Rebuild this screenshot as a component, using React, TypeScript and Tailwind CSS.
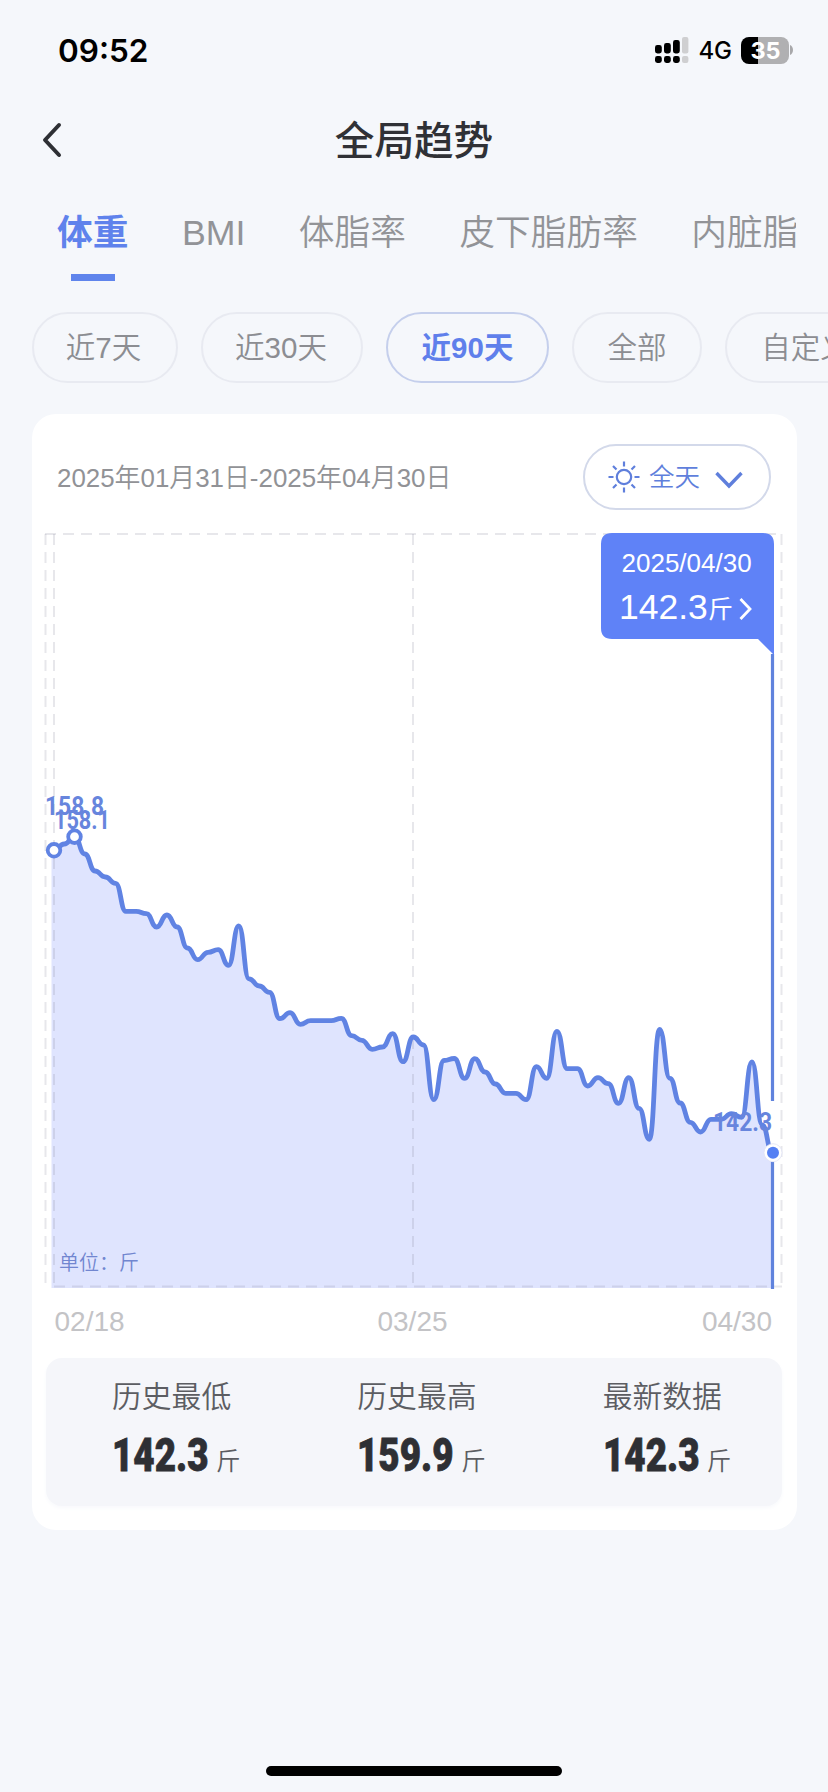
import React from "react";

const WEIGHTS_Y = [
  850.3, 844, 836.7, 854, 871, 877, 883.3, 911.3, 911.3, 913.7, 927, 915, 927, 948, 959.7, 952.3, 949.7, 965.3, 926,
  978.8, 986, 992.3, 1018.7, 1012.7, 1024.3, 1020.7, 1020.7, 1020.7, 1018.3, 1035.7, 1040.3, 1049.3, 1047, 1033.7,
  1061.7, 1037, 1045, 1099.7, 1060.5, 1058.5, 1078.3, 1058.7, 1072, 1084, 1093.3, 1093.3, 1099.7, 1066.7, 1078.3,
  1031.3, 1068.7, 1068.7, 1086, 1077.7, 1083.7, 1103.3, 1077.7, 1108.3, 1139.3, 1029.3, 1078.3, 1103, 1122.3, 1132,
  1119.3, 1119.3, 1113.7, 1117.3, 1062, 1125, 1152.7,
];
const STEP = 10.264;
const points = WEIGHTS_Y.map((y, i) => ({ x: 22 + i * STEP, y: y - 524 }));

// Smooth curve whose tangent is horizontal at every sample.
const line = points
  .map((p, i) => {
    if (i === 0) return `M${p.x} ${p.y}`;
    const q = points[i - 1];
    const m = (p.x + q.x) / 2;
    return `C${m} ${q.y} ${m} ${p.y} ${p.x} ${p.y}`;
  })
  .join("");
const area = `M19.5 764V${points[0].y}H22${line.replace(/^M/, "L")}V764Z`;

const TABS = ["BMI", "体脂率", "皮下脂肪率", "内脏脂肪"];
const STATS = [
  { label: "历史最低", value: "142.3" },
  { label: "历史最高", value: "159.9" },
  { label: "最新数据", value: "142.3" },
];

function StatusBar() {
  return (
    <div className="flex h-[100px] items-center justify-between pr-[34px] pl-[58px]">
      <span className="pt-[1px] font-['Inter'] text-[31.5px] leading-none font-semibold text-black">09:52</span>
      <div className="flex items-center">
        <svg width="34" height="28" viewBox="0 0 34 28" className="mr-[10px]">
          <g fill="#000">
            <rect x="0" y="9" width="6.8" height="8.4" rx="2.4" />
            <rect x="9" y="7" width="6.8" height="10.4" rx="2.4" />
            <rect x="18" y="4" width="6.8" height="13.4" rx="2.4" />
            <rect x="0" y="20" width="6.8" height="7" rx="2.4" />
            <rect x="9" y="20" width="6.8" height="7" rx="2.4" />
            <rect x="18" y="20" width="6.8" height="7" rx="2.4" />
          </g>
          <g fill="#cfcfd1">
            <rect x="27" y="1" width="6.4" height="16.4" rx="2" />
            <rect x="27" y="20" width="6.4" height="7" rx="2" />
          </g>
        </svg>
        <span className="mr-[10px] w-[32px] pt-[1px] font-['Inter'] text-[24px] leading-none font-medium tracking-[-0.3px] text-black">4G</span>
        <div className="flex h-[27px] w-[48px] items-center justify-center rounded-[8px] bg-linear-to-r from-black from-35% to-[#b0b0b2] to-35% pt-[1px] pl-[2px] font-['Inter'] text-[23.5px] leading-none font-bold text-white">
          35
        </div>
        <svg width="4" height="10" viewBox="0 0 4 10" className="ml-[1.5px]">
          <path d="M0 0C4 1.5 4 8.5 0 10Z" fill="#a8a8aa" />
        </svg>
      </div>
    </div>
  );
}

function Chart() {
  return (
    <svg width="765" height="830" viewBox="0 0 765 830" className="block">
      <path d={area} fill="#dfe4fe" />
      <g stroke="#85859c" strokeOpacity="0.2" strokeWidth="2" strokeDasharray="11 7" fill="none">
        <path d="M13.5 10V763" />
        <path d="M22 10V763" />
        <path d="M381 10V763" />
        <path d="M749.5 10V763" />
        <path d="M13 10H750" />
        <path d="M22 762.5H750" />
      </g>
      <path d={line} fill="none" stroke="#6083e3" strokeWidth="4.8" strokeLinejoin="round" />
      <path d="M740.5 130V577M740.5 638V765" stroke="#6083dd" strokeWidth="3.2" />
      <circle cx="22" cy="326.3" r="6.3" fill="#fff" stroke="#6083e3" strokeWidth="3.8" />
      <circle cx="42.5" cy="312.7" r="6.3" fill="#fff" stroke="#6083e3" strokeWidth="3.8" />
      <circle cx="741" cy="628.7" r="9" fill="#fff" stroke="#dfe2f5" strokeWidth="0.8" />
      <circle cx="741" cy="628.7" r="6" fill="#5580f3" />
      <g fill="#6785dd" fontFamily="Roboto, sans-serif" fontWeight="700" fontSize="26">
        <text x="13" y="290.5" textLength="59" lengthAdjust="spacingAndGlyphs">158.8</text>
        <text x="22" y="304.5" textLength="56" lengthAdjust="spacingAndGlyphs">158.1</text>
        <text x="681" y="606.5" textLength="59" lengthAdjust="spacingAndGlyphs">142.3</text>
      </g>
      <text x="27" y="746" fill="#7186d0" fontSize="20" fontFamily="'Noto Sans CJK SC', sans-serif" fontWeight="350">
        单位：斤
      </text>
      <g fill="#c3c3c6" fontSize="28" fontFamily="'Liberation Sans', sans-serif">
        <text x="22.5" y="806.5">02/18</text>
        <text x="380.5" y="806.5" textAnchor="middle">03/25</text>
        <text x="740" y="806.5" textAnchor="end">04/30</text>
      </g>
      <path d="M580 9H731Q742 9 742 20V131L726 115H580Q569 115 569 104V20Q569 9 580 9Z" fill="#5f82f7" />
      <g fill="#fff" fontFamily="'Liberation Sans', 'Noto Sans CJK SC', sans-serif">
        <text x="589.5" y="48" fontSize="26">2025/04/30</text>
        <text x="587" y="95" fontSize="35.5">142.3</text>
        <text x="676" y="94" fontSize="25">斤</text>
      </g>
      <path d="M708.5 75L718 85L708.5 95" fill="none" stroke="#fff" strokeWidth="2.8" />
    </svg>
  );
}

export default function App() {
  const pill =
    "flex h-[71px] shrink-0 items-center justify-center rounded-full border-2 border-[#e8eaf1] pt-[1px] text-[29.5px] font-[350] text-[#8c8d92]";
  return (
    <div className="flex h-[1792px] w-[828px] flex-col overflow-hidden bg-[#f5f7fb] font-['Liberation_Sans','Noto_Sans_CJK_SC',sans-serif] leading-none">
      <StatusBar />

      <header className="grid h-[80px] grid-cols-[1fr_auto_1fr] items-center">
        <svg width="22" height="36" viewBox="0 0 22 36" className="ml-[41px]">
          <path d="M18 3L4 18L18 33" fill="none" stroke="#2e2f34" strokeWidth="4" strokeLinecap="round" strokeLinejoin="round" />
        </svg>
        <h1 className="pt-[4px] text-[39.6px] font-medium text-[#303136]">全局趋势</h1>
      </header>

      <nav className="mr-[32px] flex h-[101px] gap-[53.5px] overflow-hidden pt-[36px] pl-[57px] text-[35.7px] font-[350] whitespace-nowrap text-[#929397]">
        <div className="flex flex-col items-center">
          <span className="font-bold text-[#5f82ec]">体重</span>
          <span className="mt-[22px] h-[7px] w-[44px] bg-[#5f84ec]" />
        </div>
        {TABS.map((t) => (
          <span key={t} className="shrink-0">
            {t}
          </span>
        ))}
      </nav>

      <div className="mt-[31px] flex gap-[23px] overflow-hidden pl-[32px]">
        <div className={`${pill} w-[146px] pr-[3px]`}>近7天</div>
        <div className={`${pill} w-[162px] pr-[2px]`}>近30天</div>
        <div className="flex h-[71px] w-[163px] shrink-0 items-center justify-center rounded-full border-2 border-[#c5cfec] pt-[1px] text-[29.5px] font-bold text-[#5f7feb]">
          近90天
        </div>
        <div className={`${pill} w-[130px]`}>全部</div>
        <div className={`${pill} w-[161px]`}>自定义</div>
      </div>

      <main className="mt-[31px] ml-[32px] h-[1116px] w-[765px] rounded-[24px] bg-white">
        <div className="flex h-[110px] items-end justify-between pr-[26px] pl-[25px]">
          <span className="mb-[32px] text-[25.9px] font-[350] text-[#919296]">2025年01月31日-2025年04月30日</span>
          <button className="mb-[14px] flex h-[66px] w-[188px] items-center rounded-full border-2 border-[#d3d9ea] pl-[23px] text-[25.5px] font-[350] text-[#5f7fdc]">
            <svg width="32" height="32" viewBox="-16 -16 32 32" fill="none" stroke="#5f7fdc" strokeWidth="2.2">
              <circle r="7.2" />
              <path d="M0-15.5V-10.5M0 10.5V15.5M-15.5 0H-10.5M10.5 0H15.5M-11-11L-7.5-7.5M7.5 7.5L11 11M-11 11L-7.5 7.5M7.5-7.5L11-11" />
            </svg>
            <span className="ml-[9px] pt-[2px]">全天</span>
            <svg width="28" height="18" viewBox="0 0 28 18" className="mt-[5px] ml-[15px]">
              <path d="M1.5 2L14 15L26.5 2" fill="none" stroke="#5f7fdc" strokeWidth="3.4" />
            </svg>
          </button>
        </div>
        <Chart />
        <section className="mt-[4px] ml-[14px] grid h-[148px] w-[736px] grid-cols-3 rounded-[16px] bg-[#f5f6fa] shadow-[0_2px_4px_#f8f9fc]">
          {STATS.map((s) => (
            <div key={s.label} className="flex flex-col pt-[24px] pl-[66px]">
              <span className="text-[29.8px] font-[350] text-[#5c5d62]">{s.label}</span>
              <div className="mt-[20px] flex items-end">
                <span className="w-[104px] origin-left scale-x-[0.8] font-['Roboto'] text-[46px] leading-[46px] font-black text-[#2e2f34] [-webkit-text-stroke:0.8px_#2e2f34]">
                  {s.value}
                </span>
                <span className="mb-[3px] text-[24.5px] font-[350] text-[#5c5d62]">斤</span>
              </div>
            </div>
          ))}
        </section>
      </main>

      <div className="mt-auto mb-[16px] h-[10px] w-[296px] self-center rounded-full bg-black" />
    </div>
  );
}
